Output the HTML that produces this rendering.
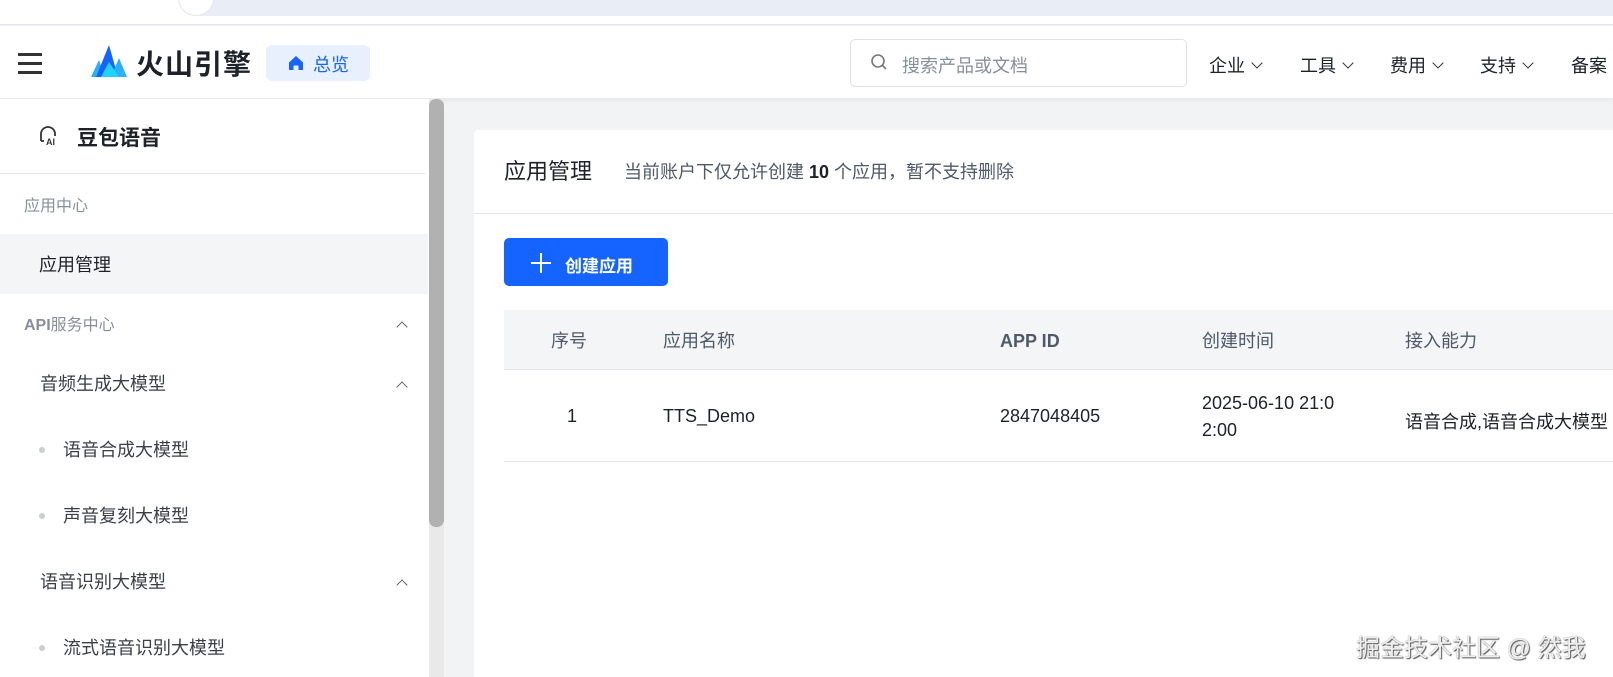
<!DOCTYPE html>
<html><head><meta charset="utf-8"><style>
*{margin:0;padding:0;box-sizing:border-box}
body{width:1613px;height:677px;overflow:hidden;background:#f2f3f5;font-family:"Liberation Sans","Noto Sans CJK SC",sans-serif;position:relative;color:#1d2129}
.a{position:absolute;white-space:nowrap}
.chev{position:absolute;width:8px;height:8px;border-left:1.5px solid #666;border-top:1.5px solid #666;transform:rotate(45deg)}
.dn{display:inline-block;width:8px;height:8px;border-right:1.8px solid #333;border-bottom:1.8px solid #333;transform:rotate(45deg);margin-left:8px;position:relative;top:-5px}
.dot{position:absolute;width:6px;height:6px;border-radius:3px;background:#c9cdd4}
</style></head><body>
<div class="a" style="left:0;top:0;width:1613px;height:25px;background:#fff;border-bottom:1px solid #e5e6eb"></div>
<div class="a" style="left:178px;top:-20px;width:1460px;height:36px;border-radius:18px;background:#e9eef6"></div>
<div class="a" style="left:178px;top:-20px;width:36px;height:36px;border-radius:18px;background:#fff;border:1px solid #e4e8ee"></div>
<!-- header -->
<div class="a" style="left:0;top:26px;width:1613px;height:72px;background:#fff;box-shadow:0 2px 6px rgba(0,0,0,.06)"></div>
<div class="a" style="left:18px;top:53px;width:24px;height:2.5px;background:#333"></div>
<div class="a" style="left:18px;top:62px;width:24px;height:2.5px;background:#333"></div>
<div class="a" style="left:18px;top:71px;width:24px;height:2.5px;background:#333"></div>
<svg class="a" style="left:91px;top:44px" width="36" height="34" viewBox="0 0 36 34"><polygon points="0,33 8,16 14,33" fill="#2ab0f5"/><polygon points="5,33 18,1 27,33" fill="#1664ff"/><polygon points="20,33 28,14 36,33" fill="#2ab0f5"/><polygon points="10,33 18,18 28,33" fill="#22d3f8"/></svg>
<div class="a" style="left:136px;top:43px;font-size:28px;font-weight:bold;color:#1d2129;letter-spacing:1px">火山引擎</div>
<div class="a" style="left:266px;top:45px;width:104px;height:36px;border-radius:6px;background:#e8f0fe"></div>
<svg class="a" style="left:288px;top:55px" width="16" height="16" viewBox="0 0 16 16"><path d="M8 1 L15 7.5 V15 H10.5 V10.5 H5.5 V15 H1 V7.5 Z" fill="#1664ff"/></svg>
<div class="a" style="left:313px;top:51px;font-size:18px;color:#1664ff">总览</div>
<div class="a" style="left:850px;top:39px;width:337px;height:48px;border:1px solid #dfe1e6;border-radius:5px;background:#fff"></div>
<svg class="a" style="left:870px;top:53px" width="18" height="18" viewBox="0 0 18 18"><circle cx="8" cy="8" r="6" fill="none" stroke="#777" stroke-width="1.6"/><path d="M12.5 12.5 L16 16" stroke="#777" stroke-width="1.6"/></svg>
<div class="a" style="left:902px;top:52px;font-size:18px;color:#86909c">搜索产品或文档</div>
<div class="a" style="left:1209px;top:52px;font-size:18px;color:#1d2129">企业<span class="dn"></span></div>
<div class="a" style="left:1300px;top:52px;font-size:18px;color:#1d2129">工具<span class="dn"></span></div>
<div class="a" style="left:1390px;top:52px;font-size:18px;color:#1d2129">费用<span class="dn"></span></div>
<div class="a" style="left:1480px;top:52px;font-size:18px;color:#1d2129">支持<span class="dn"></span></div>
<div class="a" style="left:1571px;top:52px;font-size:18px;color:#1d2129">备案</div>
<!-- sidebar -->
<div class="a" style="left:0;top:99px;width:429px;height:578px;background:#fff"></div>
<svg class="a" style="left:37px;top:124px" width="22" height="22" viewBox="0 0 22 22"><path d="M4 17 V10 A7 7 0 0 1 18 10 V12" fill="none" stroke="#333" stroke-width="1.8"/><path d="M4 17 H7" stroke="#333" stroke-width="1.8"/><text x="9" y="21" font-size="9" font-weight="bold" fill="#333" font-family="Liberation Sans">AI</text></svg>
<div class="a" style="left:77px;top:122px;font-size:21px;font-weight:bold;color:#1d2129">豆包语音</div>
<div class="a" style="left:0;top:173px;width:425px;height:1px;background:#e5e6eb"></div>
<div class="a" style="left:24px;top:192px;font-size:16px;color:#86909c">应用中心</div>
<div class="a" style="left:0;top:234px;width:428px;height:60px;background:#f4f5f7"></div>
<div class="a" style="left:39px;top:251px;font-size:18px;color:#1d2129">应用管理</div>
<div class="a" style="left:24px;top:311px;font-size:16px;color:#86909c"><b>API</b>服务中心</div>
<div class="chev" style="left:398px;top:323px"></div>
<div class="a" style="left:40px;top:370px;font-size:18px;color:#3a3f47">音频生成大模型</div>
<div class="chev" style="left:398px;top:383px"></div>
<div class="dot" style="left:39px;top:447px"></div>
<div class="a" style="left:63px;top:436px;font-size:18px;color:#3a3f47">语音合成大模型</div>
<div class="dot" style="left:39px;top:513px"></div>
<div class="a" style="left:63px;top:502px;font-size:18px;color:#3a3f47">声音复刻大模型</div>
<div class="a" style="left:40px;top:568px;font-size:18px;color:#3a3f47">语音识别大模型</div>
<div class="chev" style="left:398px;top:581px"></div>
<div class="dot" style="left:39px;top:645px"></div>
<div class="a" style="left:63px;top:634px;font-size:18px;color:#3a3f47">流式语音识别大模型</div>
<!-- scrollbar -->
<div class="a" style="left:429px;top:99px;width:15px;height:578px;background:#e9e9e9"></div>
<div class="a" style="left:429px;top:99px;width:15px;height:428px;border-radius:7px;background:#b1b1b1"></div>
<!-- card -->
<div class="a" style="left:474px;top:130px;width:1139px;height:547px;background:#fff;border-radius:4px 0 0 0"></div>
<div class="a" style="left:504px;top:154px;font-size:22px;color:#1d2129">应用管理</div>
<div class="a" style="left:624px;top:158px;font-size:18px;color:#4e5969">当前账户下仅允许创建 <b style="color:#1d2129">10</b> 个应用，暂不支持删除</div>
<div class="a" style="left:474px;top:213px;width:1139px;height:1px;background:#e5e6eb"></div>
<div class="a" style="left:504px;top:238px;width:164px;height:48px;background:#1664ff;border-radius:5px"></div>
<div class="a" style="left:531px;top:262px;width:20px;height:2px;background:#fff"></div>
<div class="a" style="left:540px;top:253px;width:2px;height:20px;background:#fff"></div>
<div class="a" style="left:565px;top:252px;font-size:17px;font-weight:bold;color:#fff">创建应用</div>
<div class="a" style="left:504px;top:310px;width:1109px;height:60px;background:#f4f5f7;border-bottom:1px solid #e5e6eb"></div>
<div class="a" style="left:551px;top:329px;font-size:18px;line-height:24px;color:#4e5969">序号</div>
<div class="a" style="left:663px;top:329px;font-size:18px;line-height:24px;color:#4e5969">应用名称</div>
<div class="a" style="left:1000px;top:329px;font-size:18px;line-height:24px;font-weight:bold;color:#4e5969">APP ID</div>
<div class="a" style="left:1202px;top:329px;font-size:18px;line-height:24px;color:#4e5969">创建时间</div>
<div class="a" style="left:1405px;top:329px;font-size:18px;line-height:24px;color:#4e5969">接入能力</div>
<div class="a" style="left:504px;top:461px;width:1109px;height:1px;background:#e5e6eb"></div>
<div class="a" style="left:567px;top:406px;font-size:18px;color:#1d2129">1</div>
<div class="a" style="left:663px;top:406px;font-size:18px;color:#1d2129">TTS_Demo</div>
<div class="a" style="left:1000px;top:406px;font-size:18px;color:#1d2129">2847048405</div>
<div class="a" style="left:1202px;top:393px;font-size:18px;color:#1d2129">2025-06-10 21:0</div>
<div class="a" style="left:1202px;top:420px;font-size:18px;color:#1d2129">2:00</div>
<div class="a" style="left:1405px;top:408px;font-size:18px;color:#1d2129">语音合成,语音合成大模型</div>
<div class="a" style="left:1356px;top:628px;font-size:24px;color:#eee;text-shadow:1px 1px 1px #555,0 0 1px #777">掘金技术社区 @ 然我</div>
</body></html>
